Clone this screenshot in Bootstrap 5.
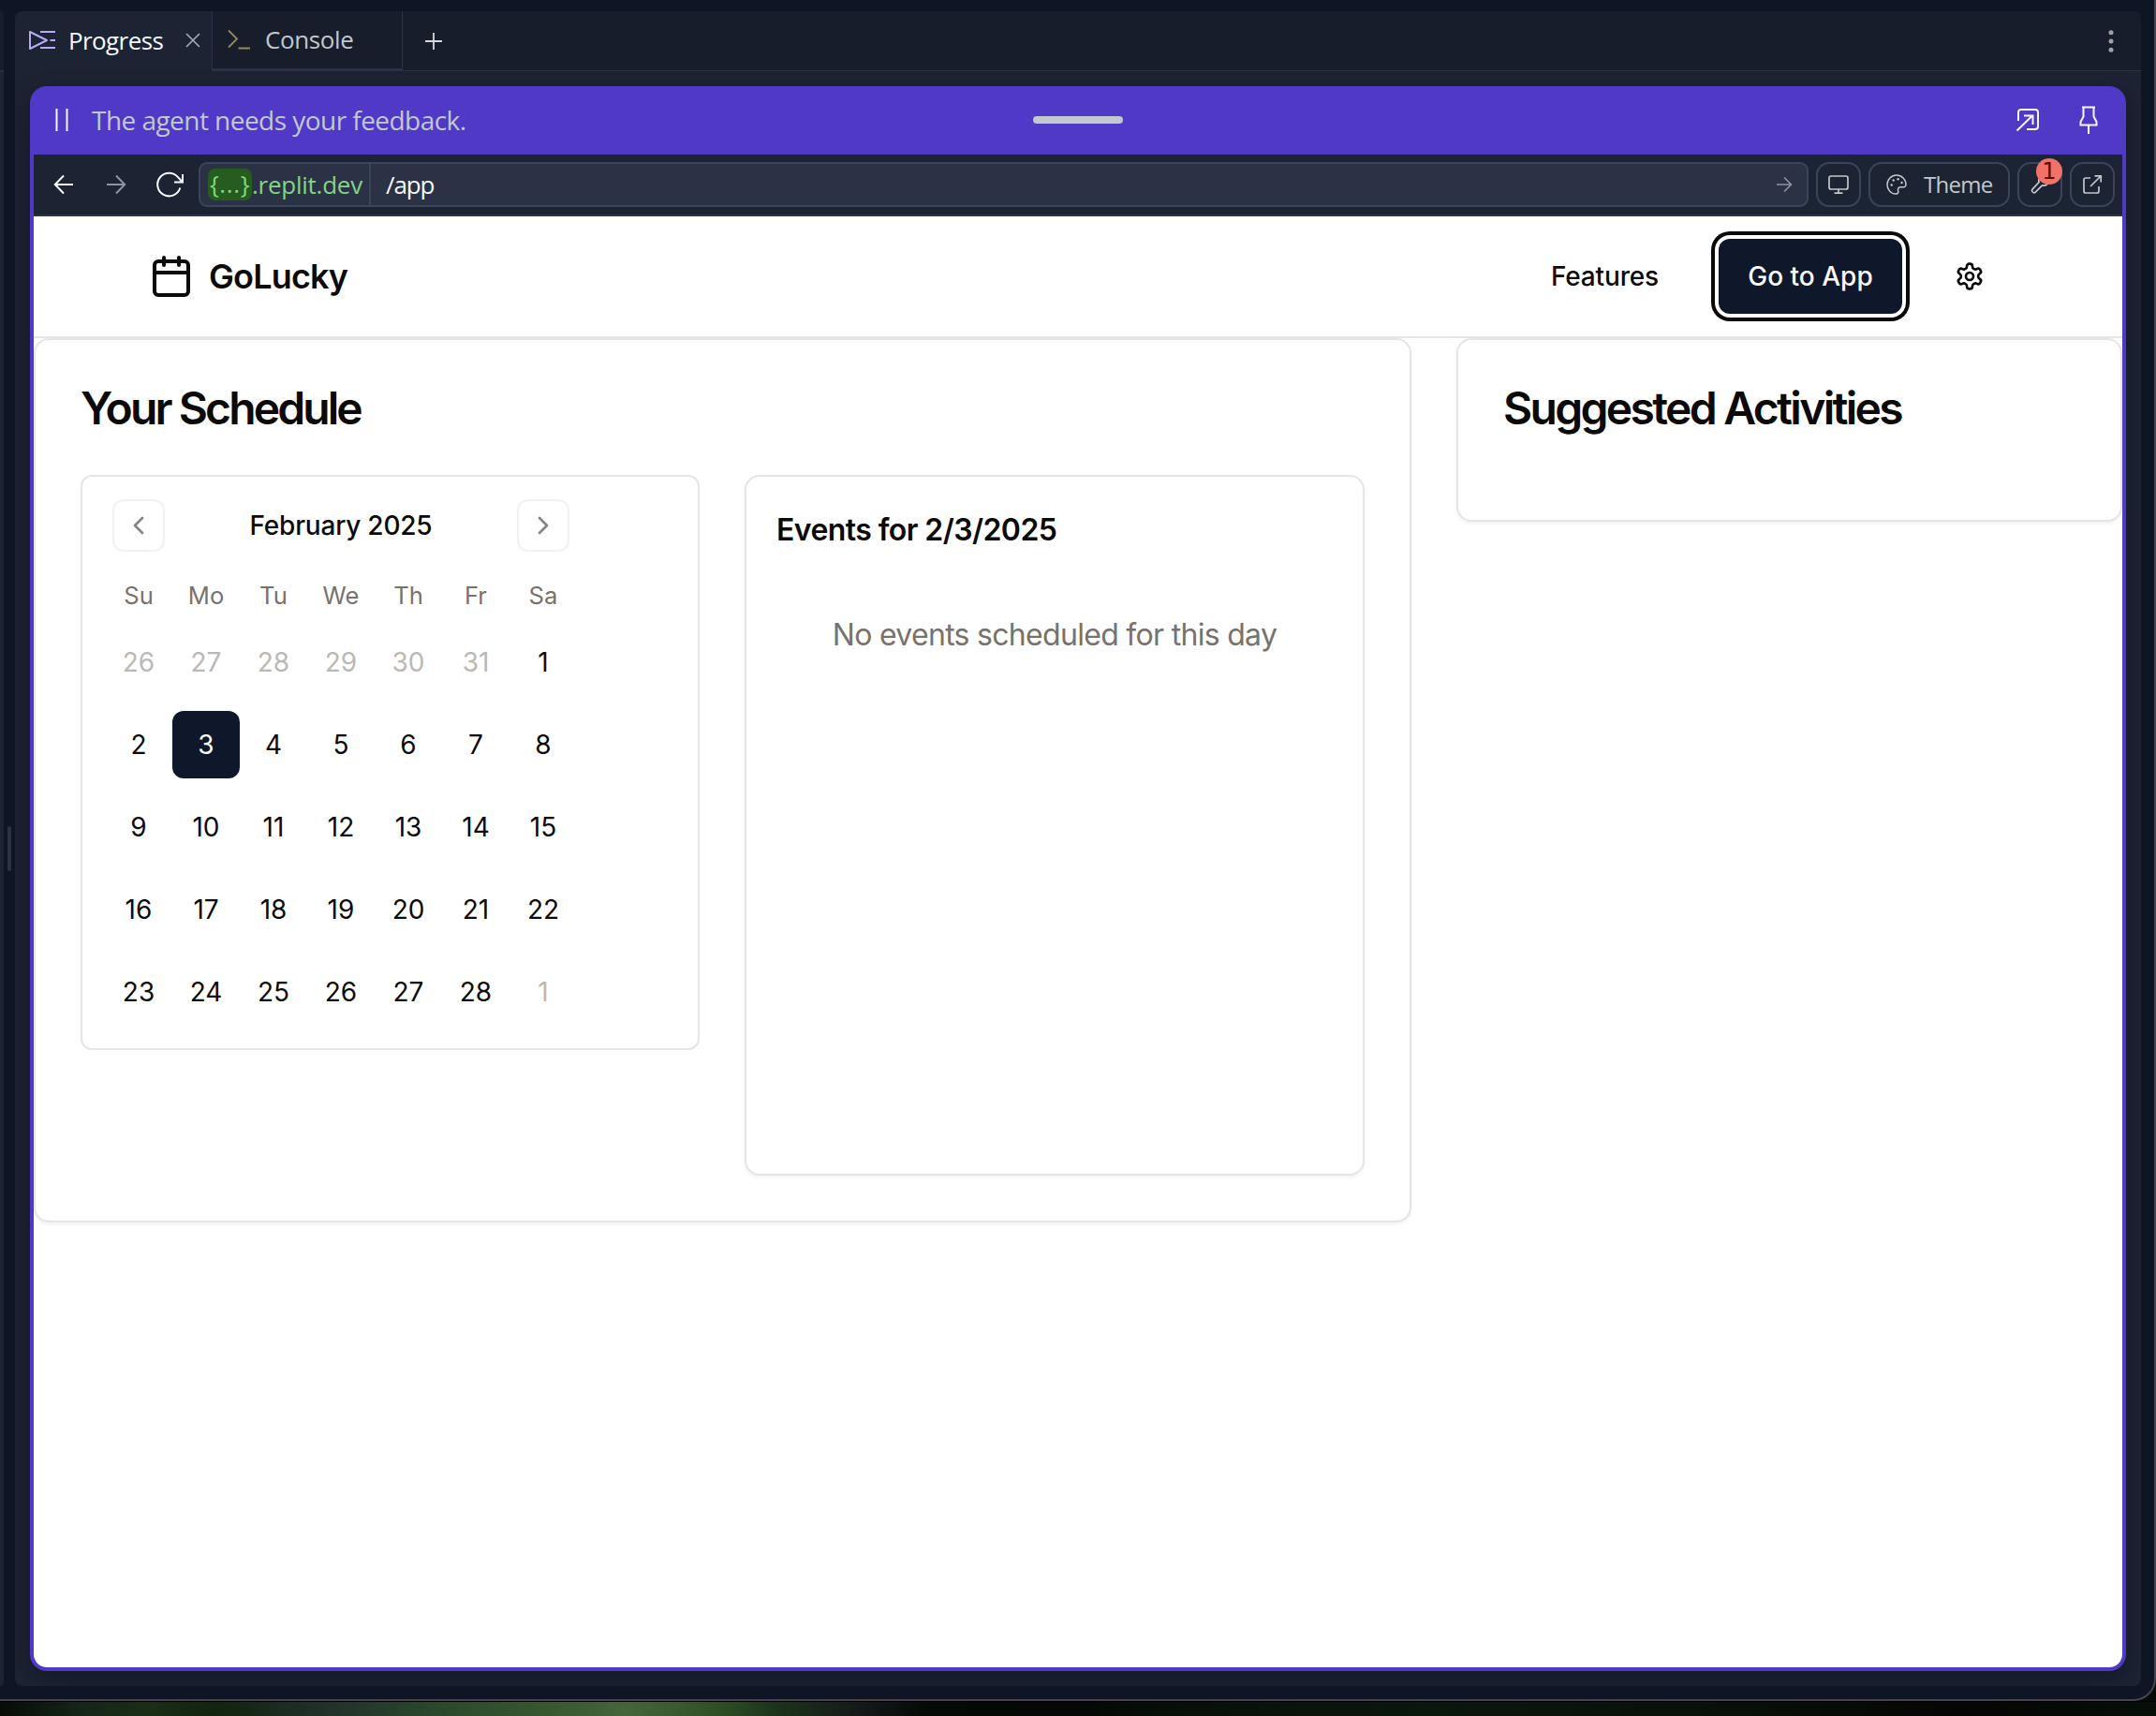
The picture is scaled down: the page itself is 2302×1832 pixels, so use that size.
<!DOCTYPE html>
<html lang="en">
<head>
<meta charset="utf-8">
<title>GoLucky</title>
<link href="https://cdn.jsdelivr.net/npm/bootstrap@5.3.0/dist/css/bootstrap.min.css" rel="stylesheet">
<style>
  html, body { height: 1832px; overflow: hidden; }
  body { background: #060b06; font-family: Inter, "Liberation Sans", sans-serif; color: #0c0a09; font-size: 28px; line-height: 40px; }
  svg { display: block; flex: none; overflow: visible; }
  svg:not([stroke]) { stroke: currentColor; }
  svg:not([fill]) { fill: none; }

  /* desktop wallpaper under the window */
  .desk-strip { height: 16px; border-top: 1px solid #000; background: linear-gradient(90deg, #070c06 0%, #16261a 4%, #1a2e15 7%, #12230f 10%, #22302a 15%, #2a4c2c 21%, #36562f 25%, #44663b 29%, #2f5326 33%, #1c331b 36%, #15181a 40%, #050a06 43%, #050806 50%, #081109 56%, #0a170d 66%, #091009 80%, #050505 91%, #070e08 100%); }

  /* editor shell */
  .ide { height: 1816px; background: #0e1525; border-right: 2px solid #44454f; border-bottom: 2px solid #44454f; border-bottom-right-radius: 24px; font-family: "Open Sans", sans-serif; padding: 12px 14px 14px 0; }
  .side-pane { width: 4px; background: linear-gradient(#171d2a 0 63px, #2b3245 63px 65px, #1c2333 65px); border-radius: 0 8px 8px 0; }
  .gutter-bar { width: 12px; }
  .gutter-bar span { width: 4px; height: 48px; border-radius: 2px; background: #2b3245; }
  .pane { background: #1c2333; border-radius: 8px; overflow: hidden; }
  .tabstrip { height: 64px; background: #171d2a; border-bottom: 1px solid #2b3245; font-size: 26px; }
  .tabstrip > div { white-space: nowrap; }
  .tab-on { width: 210px; height: 64px; background: #1c2333; color: #f5f9fc; padding: 0 13px 3px 15px; }
  .tab-off { width: 204px; border: 1px solid #2b3245; border-top: 0; border-bottom-width: 2px; color: #c2c8cc; padding: 0 0 2px 16px; }
  .t-prog { margin-left: 13px; font-weight: 500; letter-spacing: -.6px; }
  .t-cons { margin-left: 16px; letter-spacing: -.4px; }
  .dots { padding-right: 29px; }
  .webframe { margin: 16px; border-radius: 18px; background: #4f39c6; height: 1692px; padding: 0 4px 4px; box-shadow: 0 8px 24px rgba(2,4,10,.3); }
  .agent-bar { height: 73px; color: #c2c8cc; padding: 0 26px 2px 22px; }
  .t-agent { margin-left: 25px; letter-spacing: -.54px; }
  .pin { margin-left: 43px; }
  .grip { width: 96px; height: 8px; border-radius: 4px; background: #c2c8cc; top: 32px; left: 1067px; }
  .urlrow { height: 66px; background: #1c2333; border-bottom: 2px solid #2b3245; padding: 0 8px; color: #f5f9fc; font-size: 26px; }
  .navs { width: 168px; padding-left: 14px; }
  .nav-fwd { margin-left: 36px; }
  .nav-reload { margin-left: 33px; }
  .urlbox { height: 48px; background: #2b3245; border: 2px solid #3c445c; border-radius: 9px; padding: 0 16px 0 8px; }
  .urlbox .host { color: #84d484; height: 44px; width: 174px; border-right: 2px solid #3c445c; }
  .t-host { letter-spacing: -.25px; }
  .chip { background: #265c20; border-radius: 8px; height: 34px; width: 47px; line-height: 33px; text-align: center; letter-spacing: .6px; }
  .t-path { margin-left: 16px; letter-spacing: -1.1px; }
  .toolbtn { height: 48px; min-width: 48px; border: 2px solid #3c445c; border-radius: 14px; color: #c2c8cc; }
  .toolbtn.theme { width: 151px; font-size: 24px; padding: 0 17px; }
  .t-theme { margin-left: 18px; letter-spacing: -.7px; }
  .count { width: 28px; height: 28px; border-radius: 50%; background: #f07268; color: #5c0a08; font-size: 24px; line-height: 28px; text-align: center; top: -6px; right: -2px; font-family: "DejaVu Sans", sans-serif; }

  /* previewed app */
  .app { height: 1549px; background: #fff; border-radius: 0 0 14px 14px; font-family: Inter, "Liberation Sans", sans-serif; overflow: hidden; }
  .site-head { height: 130px; border-bottom: 2px solid #e7e5e4; padding: 0 131px 0 123px; }
  .brand { font-size: 36px; font-weight: 600; letter-spacing: -.85px; }
  .t-feat { margin-right: 64px; letter-spacing: -.15px; }
  .gear { margin-left: 56px; margin-right: 16px; }
  .cta { height: 80px; width: 196px; border-radius: 12px; background: #0f172a; color: #f8fafc; box-shadow: 0 0 0 4px #fff, 0 0 0 8px #0c0a09; }
  .panelbox { border: 2px solid #e7e5e4; border-radius: 16px; box-shadow: 0 2px 4px rgba(0,0,0,.06); background: #fff; }
  .sched { width: 1471px; height: 944px; padding: 48px; }
  .sugg { width: 711px; height: 196px; padding: 48px; }
  .panelbox h2 { font-size: 48px; line-height: 48px; font-weight: 600; letter-spacing: -2.9px; padding-top: 1px; margin-bottom: 47px; white-space: nowrap; }
  .sugg h2 { letter-spacing: -2.7px; }
  .cal { width: 661px; height: 614px; border: 2px solid #e5e5e5; border-radius: 12px; padding: 24px; }
  .cal-grid { width: 504px; }
  .cal-month { letter-spacing: -.2px; }
  .calbtn { width: 56px; height: 56px; border: 2px solid #f3f2f2; border-radius: 12px; color: #858483; }
  .wk { margin-bottom: 16px; }
  .wk span { width: 72px; height: 72px; line-height: 73px; text-align: center; }
  .wk.names { margin: 24px 0 14px; }
  .wk.names span { height: 44px; line-height: 45px; font-size: 25.6px; color: #78716c; }
  .wk .out { color: #bbb8b5; }
  .wk .picked { background: #0f172a; color: #f8fafc; border-radius: 12px; }
  .events { width: 662px; height: 748px; padding: 33px 32px 32px; font-size: 32px; line-height: 48px; }
  .events h3 { font-size: 32px; line-height: 48px; font-weight: 600; letter-spacing: -.58px; margin-bottom: 64px; }
  .events p { color: #78716c; letter-spacing: -.7px; }
</style>
<script src="https://cdn.jsdelivr.net/npm/bootstrap@5.3.0/dist/js/bootstrap.bundle.min.js"></script>
</head>
<body>
<div class="ide d-flex">
  <div class="side-pane"></div>
  <div class="gutter-bar d-flex align-items-center justify-content-center"><span></span></div>
  <div class="pane flex-grow-1">
    <div class="tabstrip d-flex">
      <div class="tab-on d-flex align-items-center">
        <svg width="29" height="22" viewBox="0 0 29 22" stroke="#b8a9f5" stroke-width="2"><path d="M1 2v18l18-9zM12 2h16M22.500 11H28M12 19h16" stroke-linejoin="round"/></svg>
        <span class="t-prog">Progress</span>
        <svg class="ms-auto" width="14" height="14" viewBox="0 0 14 14" stroke="#a6adb5" stroke-width="1.600"><path d="M0 0l14 14M14 0L0 14"/></svg>
      </div>
      <div class="tab-off d-flex align-items-center">
        <svg width="24" height="22" viewBox="0 0 24 22" stroke="#958a5f" stroke-width="1.800"><path d="M1 1.500l9 9-9 9M11.500 20.500H24"/></svg>
        <span class="t-cons">Console</span>
      </div>
      <div class="d-flex align-items-center ps-4"><svg width="18" height="18" viewBox="0 0 18 18" stroke="#d5dadf" stroke-width="1.800"><path d="M9 0v18M0 9h18"/></svg></div>
      <div class="d-flex align-items-center ms-auto dots"><svg width="6" height="24" viewBox="0 0 6 24" stroke="none" fill="#9ea3a9"><circle cx="3" cy="2.700" r="2.500"/><circle cx="3" cy="12" r="2.500"/><circle cx="3" cy="21.300" r="2.500"/></svg></div>
    </div>
    <div class="webframe">
      <div class="agent-bar d-flex align-items-center position-relative">
        <svg width="15" height="24" viewBox="0 0 15 24" stroke="#f5f9fc" stroke-width="2"><path d="M2.500 0v24M13.500 0v24"/></svg>
        <span class="t-agent">The agent needs your feedback.</span>
        <div class="grip position-absolute"></div>
        <svg class="ms-auto" width="24" height="24" viewBox="0 0 24 24" stroke="#f5f9fc" stroke-width="2"><path d="M2 13V4q0-3 3-3h15q3 0 3 3v15q0 3-3 3h-9M.500 23.500L17 7.500M8 7.500h9.500V17"/></svg>
        <svg class="pin" width="20" height="30" viewBox="0 0 20 30" stroke="#f5f9fc" stroke-width="2"><path d="M3 1.500h14M4.500 2v9.500L1.500 17v3.500h17V17l-3-5.500V2M10 20.500V30"/></svg>
      </div>
      <div class="urlrow d-flex align-items-center">
        <div class="navs d-flex align-items-center">
          <svg width="20" height="20" viewBox="0 0 20 20" stroke-width="2"><path d="M20 10H1M10 .500L.800 10l9.200 9.500"/></svg>
          <svg class="nav-fwd" width="20" height="20" viewBox="0 0 20 20" stroke="#8e949d" stroke-width="2"><path d="M0 10h19M10 .500l9.200 9.500-9.200 9.500"/></svg>
          <svg class="nav-reload" width="29" height="27" viewBox="0 0 29 27" stroke-width="2"><path d="M25.300 16.500A12.300 12.300 0 1 1 23 5.200L27.500 10M28 2v8.500h-9"/></svg>
        </div>
        <div class="urlbox d-flex align-items-center flex-grow-1">
          <div class="host d-flex align-items-center"><span class="chip">{...}</span><span class="t-host">.replit.dev</span></div>
          <span class="t-path">/app</span>
          <svg class="ms-auto" width="16" height="16" viewBox="0 0 16 16" stroke="#8e949d" stroke-width="1.600"><path d="M0 8h15.500M8 .500L15.500 8 8 15.500"/></svg>
        </div>
        <div class="toolbtn ms-2 d-flex align-items-center justify-content-center"><svg width="22" height="20" viewBox="0 0 22 20" stroke-width="1.700"><rect x="1" y="1" width="20" height="14" rx="2"/><path d="M11 15v4M6.500 19.200h9"/></svg></div>
        <div class="toolbtn theme ms-2 d-flex align-items-center">
          <svg width="22" height="22" viewBox="0 0 22 22" stroke-width="1.500"><path d="M11 1C5.500 1 1 5.500 1 11c0 5 3.500 10 9 10 3.300 0 3-2.400 2.600-3.800-.500-2.200.800-3.400 2.600-3.400 2 0 5.800.800 5.800-2.800C21 5.500 16.500 1 11 1z"/><g fill="currentColor" stroke="none"><circle cx="5.700" cy="11.500" r="1.200"/><circle cx="7.700" cy="6.500" r="1.200"/><circle cx="12.600" cy="5.300" r="1.200"/><circle cx="16.600" cy="9" r="1.200"/></g></svg>
          <span class="t-theme">Theme</span>
        </div>
        <div class="toolbtn ms-2 d-flex align-items-center justify-content-center position-relative">
          <svg width="20" height="20" viewBox="0 0 20 20" stroke-width="1.700"><path d="M9 7.500C8 3.500 11 .500 15 1l-3 3.500 3.500 3.500L19 5c.800 4-2.500 7-6.500 6L5 18.300c-1.700 1.500-4.500-1.300-3.200-3z"/></svg>
          <span class="count position-absolute">1</span>
        </div>
        <div class="toolbtn ms-2 d-flex align-items-center justify-content-center"><svg width="20" height="20" viewBox="0 0 20 20" stroke-width="1.700"><path d="M8 3H3Q1 3 1 5v12q0 2 2 2h12q2 0 2-2v-5M8 12L19 1M12.500.900h6.700V7.500"/></svg></div>
      </div>
      <div class="app">
        <div class="site-head d-flex align-items-center">
          <svg width="48" height="48" viewBox="0 0 24 24" stroke-width="2" stroke-linecap="round" stroke-linejoin="round"><path d="M8 2v4M16 2v4"/><rect width="18" height="18" x="3" y="4" rx="2"/><path d="M3 10h18"/></svg>
          <span class="brand ms-3">GoLucky</span>
          <div class="d-flex align-items-center ms-auto fw-medium">
            <span class="t-feat">Features</span>
            <div class="cta d-flex align-items-center justify-content-center">Go to App</div>
            <svg class="gear" width="32" height="32" viewBox="0 0 24 24" stroke-width="2" stroke-linecap="round" stroke-linejoin="round"><path d="M12.220 2h-.440a2 2 0 0 0-2 2v.180a2 2 0 0 1-1 1.730l-.430.250a2 2 0 0 1-2 0l-.150-.080a2 2 0 0 0-2.730.730l-.220.380a2 2 0 0 0 .730 2.730l.150.100a2 2 0 0 1 1 1.720v.510a2 2 0 0 1-1 1.740l-.150.090a2 2 0 0 0-.730 2.730l.220.380a2 2 0 0 0 2.730.730l.150-.080a2 2 0 0 1 2 0l.430.250a2 2 0 0 1 1 1.730V20a2 2 0 0 0 2 2h.440a2 2 0 0 0 2-2v-.180a2 2 0 0 1 1-1.730l.430-.250a2 2 0 0 1 2 0l.150.080a2 2 0 0 0 2.730-.730l.220-.390a2 2 0 0 0-.730-2.730l-.150-.080a2 2 0 0 1-1-1.740v-.500a2 2 0 0 1 1-1.740l.150-.090a2 2 0 0 0 .730-2.730l-.220-.380a2 2 0 0 0-2.730-.730l-.150.080a2 2 0 0 1-2 0l-.430-.250a2 2 0 0 1-1-1.730V4a2 2 0 0 0-2-2z"/><circle cx="12" cy="12" r="3"/></svg>
          </div>
        </div>
        <div class="d-flex align-items-start justify-content-between">
          <div class="panelbox sched">
            <h2>Your Schedule</h2>
            <div class="d-flex justify-content-between align-items-start">
              <div class="cal">
                <div class="cal-grid">
                  <div class="d-flex align-items-center justify-content-between px-2">
                    <div class="calbtn d-flex align-items-center justify-content-center"><svg width="32" height="32" viewBox="0 0 24 24" stroke-width="2" stroke-linecap="round" stroke-linejoin="round"><path d="m15 18-6-6 6-6"/></svg></div>
                    <span class="cal-month fw-medium">February 2025</span>
                    <div class="calbtn d-flex align-items-center justify-content-center"><svg width="32" height="32" viewBox="0 0 24 24" stroke-width="2" stroke-linecap="round" stroke-linejoin="round"><path d="m9 18 6-6-6-6"/></svg></div>
                  </div>
                  <div class="wk names d-flex"><span>Su</span><span>Mo</span><span>Tu</span><span>We</span><span>Th</span><span>Fr</span><span>Sa</span></div>
                  <div class="wk d-flex"><span class="out">26</span><span class="out">27</span><span class="out">28</span><span class="out">29</span><span class="out">30</span><span class="out">31</span><span>1</span></div>
                  <div class="wk d-flex"><span>2</span><span class="picked">3</span><span>4</span><span>5</span><span>6</span><span>7</span><span>8</span></div>
                  <div class="wk d-flex"><span>9</span><span>10</span><span>11</span><span>12</span><span>13</span><span>14</span><span>15</span></div>
                  <div class="wk d-flex"><span>16</span><span>17</span><span>18</span><span>19</span><span>20</span><span>21</span><span>22</span></div>
                  <div class="wk d-flex"><span>23</span><span>24</span><span>25</span><span>26</span><span>27</span><span>28</span><span class="out">1</span></div>
                </div>
              </div>
              <div class="panelbox events">
                <h3>Events for 2/3/2025</h3>
                <p class="text-center mb-0">No events scheduled for this day</p>
              </div>
            </div>
          </div>
          <div class="panelbox sugg"><h2 class="mb-0">Suggested Activities</h2></div>
        </div>
      </div>
    </div>
  </div>
</div>
<div class="desk-strip"></div>
</body>
</html>
